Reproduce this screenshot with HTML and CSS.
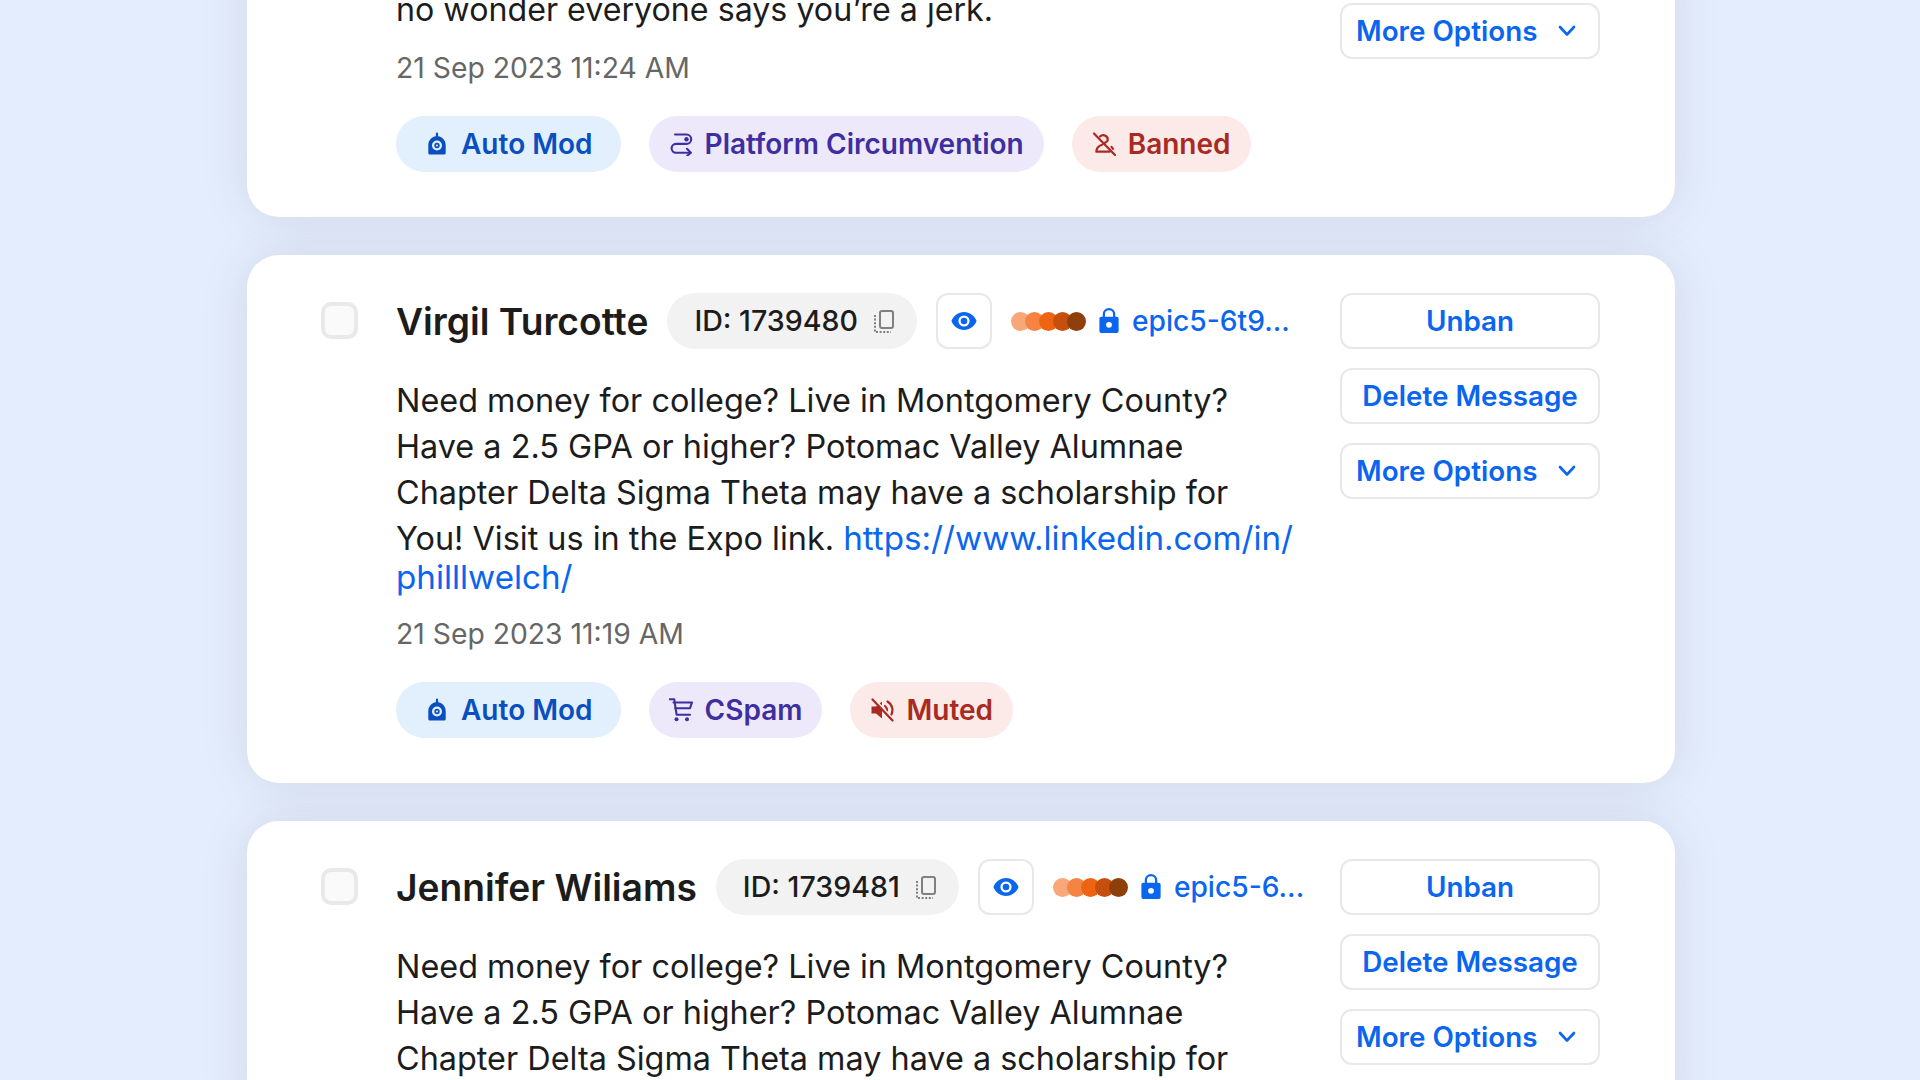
FILE: index.html
```html
<!DOCTYPE html>
<html lang="en">
<head>
<meta charset="utf-8">
<title>Moderation queue</title>
<link rel="stylesheet" href="styles.css">
</head>
<body>
<svg class="defs" width="0" height="0" aria-hidden="true">
  <symbol id="i-robot" viewBox="0 0 24 24">
    <path fill="currentColor" fill-rule="evenodd" d="M12 0.600a1.100 1.100 0 0 1 1.100 1.100v2.600c4.300.6 7.600 4.300 7.600 8.700v8a1.600 1.600 0 0 1-1.600 1.600H4.900a1.600 1.600 0 0 1-1.600-1.600v-8c0-4.400 3.300-8.100 7.600-8.700V1.700A1.100 1.100 0 0 1 12 .6zm0 7.900a5 5 0 1 0 0 10 5 5 0 0 0 0-10zm0 2.300a2.700 2.700 0 1 1 0 5.400 2.700 2.700 0 0 1 0-5.400zm0 1.700a1 1 0 1 0 0 2 1 1 0 0 0 0-2z"/>
  </symbol>
  <symbol id="i-route" viewBox="0 0 24 24">
    <g fill="none" stroke="currentColor" stroke-width="2.100" stroke-linecap="round" stroke-linejoin="round">
      <path d="M6 2.500H17.500a4.700 4.700 0 0 1 0 9.400H7a4.400 4.400 0 0 0 0 8.800H21.500"/>
      <path d="M18 16.800l3.800 3.900-3.800 3.300"/>
    </g>
    <circle cx="17.500" cy="7.200" r="2.200" fill="currentColor"/>
  </symbol>
  <symbol id="i-ban" viewBox="0 0 24 24">
    <g fill="none" stroke="currentColor" stroke-width="2.200" stroke-linecap="round" stroke-linejoin="round">
      <path d="M2 1.500L23 23"/>
      <path d="M8 4.500a4.500 4.500 0 0 1 7.500 4.500c-.8 1.200-2.500 1.800-3.500 2.200"/>
      <path d="M10.500 12.500C7.500 13.500 4.300 15.500 4.300 19.700h13.500"/>
      <path d="M19.500 14.800l1.500 2"/>
    </g>
  </symbol>
  <symbol id="i-cart" viewBox="0 0 24 24">
    <g fill="none" stroke="currentColor" stroke-width="2.100" stroke-linecap="round" stroke-linejoin="round">
      <path d="M.8 1.200h4.400l2.400 15.500H21"/>
      <path d="M4.500 4.500H23l-2 5.700H6.200"/>
    </g>
    <circle cx="7.500" cy="21.200" r="2" fill="currentColor"/>
    <circle cx="18" cy="21.200" r="2" fill="currentColor"/>
  </symbol>
  <symbol id="i-mute" viewBox="0 0 24 24">
    <path fill="currentColor" d="M1.500 8.500h4.500L12 3.500v17l-6-5H1.500z"/>
    <g fill="none" stroke="currentColor" stroke-width="2.200" stroke-linecap="round">
      <path d="M15 8a5.500 5.500 0 0 1 1 7"/>
      <path d="M17.500 3.500a10 10 0 0 1 3 14.500"/>
    </g>
    <path class="knock" d="M4.800 1.500l20 21"/>
    <path d="M2.500 1.500l20 21" fill="none" stroke="currentColor" stroke-width="2.200" stroke-linecap="round"/>
  </symbol>
  <symbol id="i-copy" viewBox="0 0 24 24">
    <rect x="8" y="2" width="13" height="17" rx="2" fill="none" stroke="currentColor" stroke-width="2"/>
    <path d="M3 6v17h16" fill="none" stroke="currentColor" stroke-width="2" stroke-dasharray="2 1.600"/>
  </symbol>
  <symbol id="i-eye" viewBox="0 0 26 18">
    <path fill="currentColor" fill-rule="evenodd" d="M13 0C7.300 0 2.600 3.600.4 9c2.200 5.400 6.900 9 12.600 9s10.400-3.600 12.600-9C23.400 3.600 18.700 0 13 0zm0 3.400a5.600 5.600 0 1 1 0 11.200 5.600 5.600 0 0 1 0-11.200zm0 2.300a3.300 3.300 0 1 0 0 6.600 3.300 3.300 0 0 0 0-6.600z"/>
  </symbol>
  <symbol id="i-lock" viewBox="0 0 20 26">
    <path fill="currentColor" fill-rule="evenodd" d="M10 0a6.500 6.500 0 0 1 6.500 6.500V9H18a2 2 0 0 1 2 2v13a2 2 0 0 1-2 2H2a2 2 0 0 1-2-2V11a2 2 0 0 1 2-2h1.500V6.500A6.500 6.500 0 0 1 10 0zm0 2.300a4.200 4.200 0 0 0-4.200 4.200V9h8.400V6.500A4.200 4.200 0 0 0 10 2.300zM10 14.500a3 3 0 1 0 0 6 3 3 0 0 0 0-6z"/>
  </symbol>
  <symbol id="i-chevron" viewBox="0 0 18 12">
    <path d="M2 2l7 7.500L16 2" fill="none" stroke="currentColor" stroke-width="2.600" stroke-linecap="round" stroke-linejoin="round"/>
  </symbol>
</svg>

<main class="feed">

  <article class="card card-clipped">
    <div class="main main-clipped">
      <p class="message"><span class="lead">no wonder everyone says you’re a jerk.</span></p>
      <time class="date">21 Sep 2023 11:24 AM</time>
      <ul class="tags">
        <li class="tag tag-auto"><svg class="tag-icon"><use href="#i-robot"/></svg>Auto Mod</li>
        <li class="tag tag-purple"><svg class="tag-icon"><use href="#i-route"/></svg>Platform Circumvention</li>
        <li class="tag tag-red"><svg class="tag-icon"><use href="#i-ban"/></svg>Banned</li>
      </ul>
    </div>
    <div class="actions actions-clipped">
      <button class="btn btn-more">More Options<svg class="chevron"><use href="#i-chevron"/></svg></button>
    </div>
  </article>

  <article class="card">
    <span class="checkbox"></span>
    <div class="main">
      <header class="head">
        <h2 class="name">Virgil Turcotte</h2>
        <span class="id-pill">ID: 1739480<svg class="copy"><use href="#i-copy"/></svg></span>
        <button class="eye-btn"><svg class="eye"><use href="#i-eye"/></svg></button>
        <span class="dots"><i class="dot d1"></i><i class="dot d2"></i><i class="dot d3"></i><i class="dot d4"></i><i class="dot d5"></i></span>
        <span class="epic"><svg class="lock"><use href="#i-lock"/></svg>epic5-6t9...</span>
      </header>
      <p class="message"><span class="lead">Need money for college? Live in Montgomery County? Have a 2.5 GPA or higher? Potomac Valley Alumnae Chapter Delta Sigma Theta may have a scholarship for You! Visit us in the Expo link.</span> <a class="link">https://www.linkedin.com/in/<wbr>philllwelch/</a></p>
      <time class="date">21 Sep 2023 11:19 AM</time>
      <ul class="tags">
        <li class="tag tag-auto"><svg class="tag-icon"><use href="#i-robot"/></svg>Auto Mod</li>
        <li class="tag tag-purple"><svg class="tag-icon"><use href="#i-cart"/></svg>CSpam</li>
        <li class="tag tag-red"><svg class="tag-icon"><use href="#i-mute"/></svg>Muted</li>
      </ul>
    </div>
    <div class="actions">
      <button class="btn">Unban</button>
      <button class="btn">Delete Message</button>
      <button class="btn btn-more">More Options<svg class="chevron"><use href="#i-chevron"/></svg></button>
    </div>
  </article>

  <article class="card">
    <span class="checkbox"></span>
    <div class="main">
      <header class="head">
        <h2 class="name">Jennifer Wiliams</h2>
        <span class="id-pill">ID: 1739481<svg class="copy"><use href="#i-copy"/></svg></span>
        <button class="eye-btn"><svg class="eye"><use href="#i-eye"/></svg></button>
        <span class="dots"><i class="dot d1"></i><i class="dot d2"></i><i class="dot d3"></i><i class="dot d4"></i><i class="dot d5"></i></span>
        <span class="epic"><svg class="lock"><use href="#i-lock"/></svg>epic5-6...</span>
      </header>
      <p class="message"><span class="lead">Need money for college? Live in Montgomery County? Have a 2.5 GPA or higher? Potomac Valley Alumnae Chapter Delta Sigma Theta may have a scholarship for</span></p>
    </div>
    <div class="actions">
      <button class="btn">Unban</button>
      <button class="btn">Delete Message</button>
      <button class="btn btn-more">More Options<svg class="chevron"><use href="#i-chevron"/></svg></button>
    </div>
  </article>

</main>
</body>
</html>
```
FILE: styles.css
```css
* { box-sizing: border-box; }
html, body { height: 100%; }
body {
  margin: 0;
  overflow: hidden;
  background: #e4edfe;
  font-family: Inter, "Liberation Sans", sans-serif;
  color: #1c1c1c;
}
.defs { display: block; height: 0; }
.knock { fill: none; stroke: #fbeae8; stroke-width: 2; }

.feed {
  display: flex;
  flex-direction: column;
  gap: 38px;
  margin: -60px 245px 0 247px;
}
.card {
  display: flex;
  background: #fff;
  border-radius: 32px;
  padding: 38px 75px 45px 74px;
  box-shadow: 0 0 50px rgba(60, 50, 0, 0.1);
}
.card-clipped { padding-top: 47px; padding-left: 149px; }

.checkbox {
  flex: none;
  width: 37px;
  height: 37px;
  margin: 9px 38px 0 0;
  background: #fafafa;
  border: 4px solid #e9e9e9;
  border-radius: 10px;
}

.main { flex: 1; min-width: 0; }

.head { display: flex; align-items: center; height: 56px; }
.name {
  margin: 2px 19px 0 0;
  font-size: 37.2px;
  font-weight: 600;
  line-height: 56px;
  white-space: nowrap;
}
.id-pill {
  display: flex;
  align-items: center;
  gap: 14px;
  height: 56px;
  padding: 0 21px 1px 27px;
  border-radius: 28px;
  background: #f2f2f2;
  font-size: 28.6px;
  font-weight: 500;
  white-space: nowrap;
}
.copy { width: 24px; height: 24px; color: #808080; }
.eye-btn {
  display: flex;
  align-items: center;
  justify-content: center;
  flex: none;
  width: 56px;
  height: 56px;
  margin-left: 19px;
  padding: 0;
  background: #fff;
  border: 2px solid #e8e8e8;
  border-radius: 12px;
  color: #0a66ee;
}
.eye { width: 26px; height: 18px; }
.dots { display: flex; margin-left: 19px; }
.dot { width: 19px; height: 19px; border-radius: 50%; }
.dot + .dot { margin-left: -5px; }
.d1 { background: #f8a878; }
.d2 { background: #f58442; }
.d3 { background: #ee6412; }
.d4 { background: #c5500e; }
.d5 { background: #8f3f0b; }
.epic {
  display: flex;
  align-items: center;
  gap: 13px;
  margin-left: 13px;
  padding-bottom: 1px;
  font-size: 28.2px;
  font-weight: 500;
  color: #0a66ee;
  white-space: nowrap;
}
.lock { width: 20px; height: 25px; }

.message {
  margin: 29px 0 0;
  font-size: 32.4px;
  line-height: 30px;
}
.lead { line-height: 46px; }
.link { color: #0a66ee; font-size: 33.2px; }
.main-clipped .message { margin-top: 0; font-size: 32.2px; }

.date {
  display: block;
  margin-top: 22px;
  font-size: 28.3px;
  line-height: 38px;
  color: #666;
}
.main-clipped .date { margin-top: 16px; }

.tags { display: flex; gap: 28px; margin: 29px 0 0; padding: 0; list-style: none; }
.tag {
  display: flex;
  align-items: center;
  gap: 12px;
  height: 56px;
  padding: 0 20px;
  border-radius: 28px;
  font-size: 28px;
  font-weight: 600;
  white-space: nowrap;
}
.tag-icon { width: 24px; height: 24px; flex: none; }
.tag-auto { padding: 0 28px 0 29px; background: #e2effd; color: #0a4fbf; }
.tag-purple { background: #eee9fa; color: #3e2fa0; }
.tag-red { background: #fbeae8; color: #a82a22; }

.actions {
  flex: none;
  display: flex;
  flex-direction: column;
  gap: 19px;
  width: 260px;
  margin-left: 40px;
}
.actions-clipped { padding-top: 16px; }
.btn {
  display: flex;
  align-items: center;
  justify-content: center;
  height: 56px;
  padding: 0 14px 1px;
  background: #fff;
  border: 2px solid #e8e8e8;
  border-radius: 12px;
  font: 600 27.8px Inter, "Liberation Sans", sans-serif;
  color: #0a66ee;
  white-space: nowrap;
}
.btn-more { justify-content: space-between; padding-right: 22px; }
.chevron { width: 18px; height: 12px; }
```
